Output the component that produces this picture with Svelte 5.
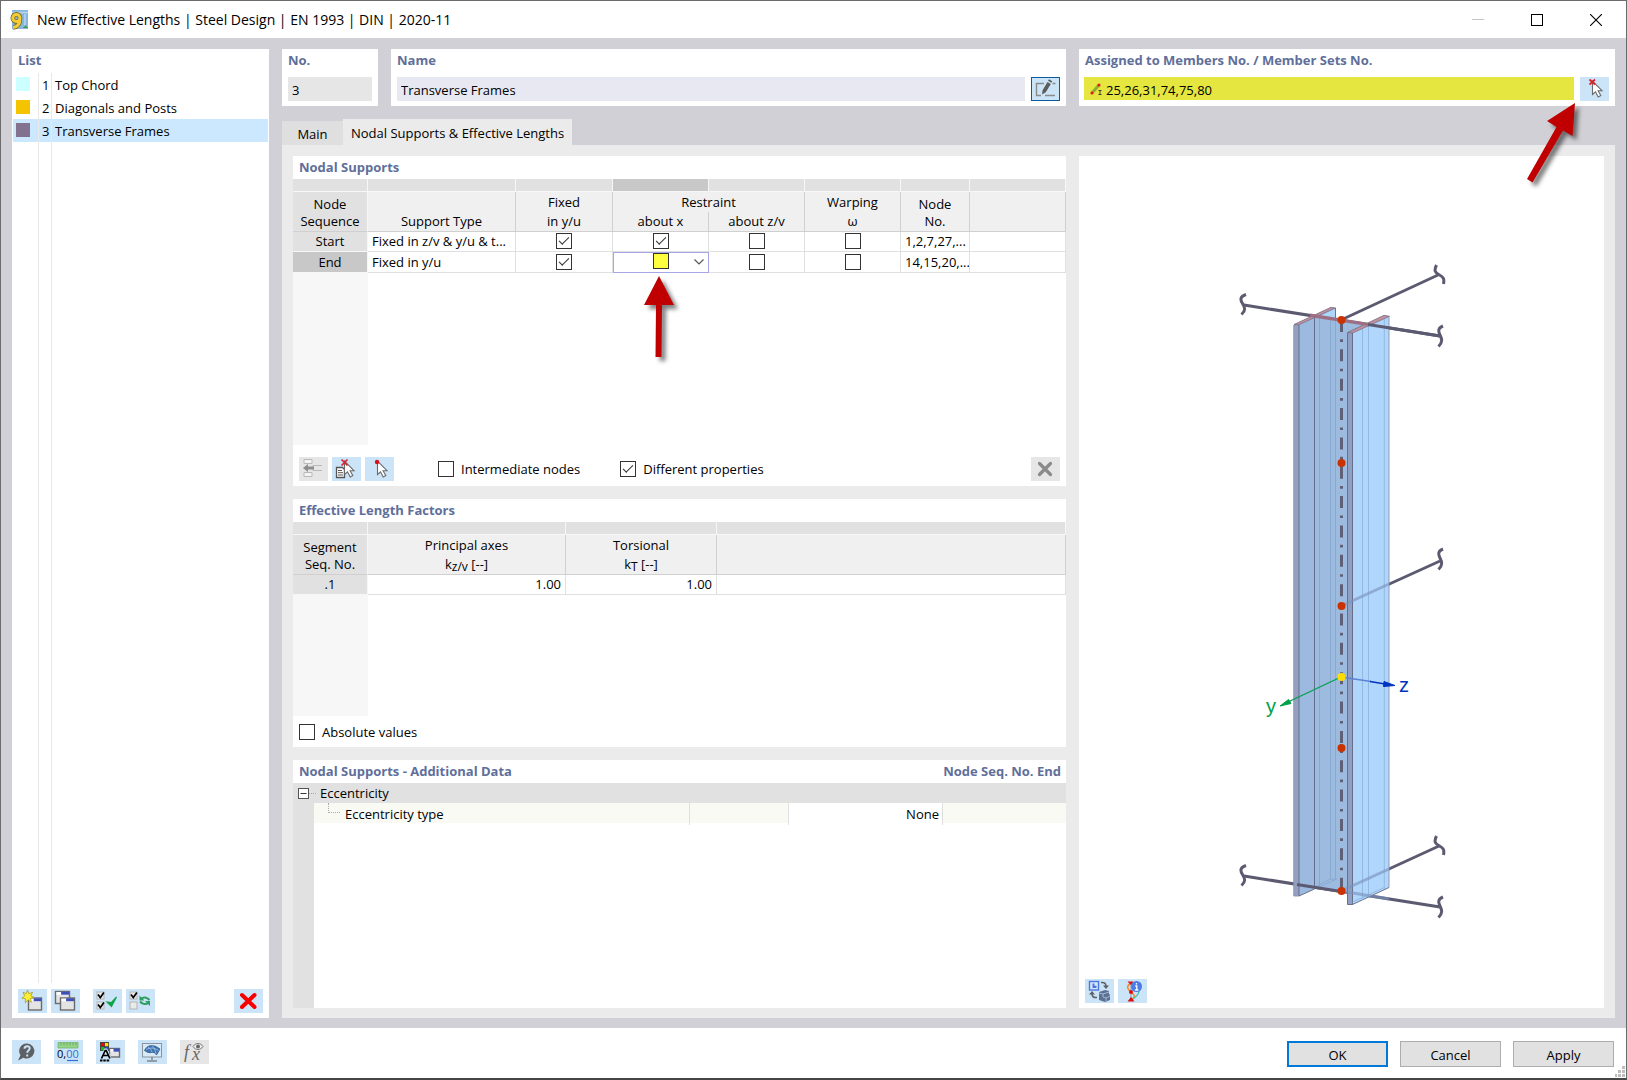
<script lang="ts">
  interface Entry {
    no: number;
    name: string;
    color: string;
  }

  const entries: Entry[] = [
    { no: 1, name: "Top Chord", color: "#ccffff" },
    { no: 2, name: "Diagonals and Posts", color: "#f5c400" },
    { no: 3, name: "Transverse Frames", color: "#83728f" },
  ];

  let selected = $state(3);
  let name = $state("Transverse Frames");
  let members = $state("25,26,31,74,75,80");

  let supports = $state([
    { seq: "Start", type: "Fixed in z/v & y/u & t...", y: true, x: true, z: false, warp: false, nodes: "1,2,7,27,..." },
    { seq: "End", type: "Fixed in y/u", y: true, x: false, z: false, warp: false, nodes: "14,15,20,..." },
  ]);

  let intermediate = $state(false);
  let different = $state(true);
  let absolute = $state(false);

  // node heights along the member axis, in drawing units
  const nodeYs = [70, 213, 356, 498, 641];
</script>

{#snippet miniWindow(x: number, y: number, w: number, h: number)}
  <rect {x} {y} width={w} height={h} fill="#e4e4e4" stroke="#6b6b6b" stroke-width="1.4" />
  <rect x={x + 1} y={y + 0.6} width={w - 2} height="2.6" fill="#fff" />
  <rect x={x + w * 0.4} y={y + 0.2} width={w * 0.6 - 0.4} height="3" fill="#3d4fb8" />
{/snippet}

{#snippet miniCheck(x: number, y: number, on: boolean)}
  <rect {x} {y} width="7" height="7" fill="#e9e9e9" stroke="#b5b5b5" stroke-width="1" />
  {#if on}
    <path d={`M${x + 1} ${y + 2.5}l2.3 3 3.6-5`} fill="none" stroke="#000" stroke-width="1.7" />
  {/if}
{/snippet}

{#snippet cursor()}
  <path d="M12.5 4v13.500l3-2.700 2.700 5.200 2.600-1.400-2.700-4.900h3.900z" fill="#fff" stroke="#6a6a6a" stroke-width="1.100" />
{/snippet}

<div class="window">
  <header class="titlebar">
    <svg class="app-icon" viewBox="0 0 20 22" aria-hidden="true">
      <rect x="3" y="1" width="16" height="19" fill="#86b6de" />
      <path d="M3 3.500h16M16 5v14" stroke="#b9d6ec" stroke-width="1.500" />
      <path d="M14 19l2.500-3 2.500 3z" fill="#3e9b57" />
      <path d="M11 9a3.600 3.600 0 1 0-3.600 3.600C9.500 12.600 11 11 11 9zm0 0c0 5-1.500 9-7 9.500" fill="none" stroke="#7d6a1f" stroke-width="4.600" />
      <path d="M11 9a3.600 3.600 0 1 0-3.600 3.600C9.500 12.600 11 11 11 9zm0 0c0 5-1.500 9-7 9.500" fill="none" stroke="#f3cb38" stroke-width="3" />
    </svg>
    <h1>New Effective Lengths | Steel Design | EN 1993 | DIN | 2020-11</h1>
    <div class="window-buttons">
      <button aria-label="Minimize" disabled><svg viewBox="0 0 12 12"><path d="M0 5.500h12" stroke="#c4c4c4" /></svg></button>
      <button aria-label="Maximize"><svg viewBox="0 0 12 12"><rect x=".5" y=".5" width="11" height="11" fill="none" stroke="#000" /></svg></button>
      <button aria-label="Close"><svg viewBox="0 0 12 12"><path d="M0 0l12 12M12 0L0 12" stroke="#000" stroke-width="1.100" /></svg></button>
    </div>
  </header>

  <main class="body">
    <aside class="panel list-panel">
      <h2>List</h2>
      <ul class="list">
        {#each entries as entry (entry.no)}
          <li>
            <button class="entry" class:selected={selected === entry.no} onclick={() => (selected = entry.no)}>
              <span class="swatch" style="background:{entry.color}"></span>
              <span class="entry-no">{entry.no}</span>
              <span>{entry.name}</span>
            </button>
          </li>
        {/each}
      </ul>
      <div class="tools list-tools">
        <button class="tool" aria-label="New">
          <svg viewBox="0 0 29 24">
            {@render miniWindow(10.5, 9, 13, 12)}
            <path d="M9.500 1l1.400 3.700 3.700-1.500-1.700 3.600 3.300 1.700-3.700.8.800 4-3.300-2.500-2.700 3 .1-4.100-3.600-.6 3-2.300-1.800-3.300 3.400 1z" fill="#ffef2e" stroke="#9a9326" stroke-width=".7" />
          </svg>
        </button>
        <button class="tool" aria-label="Copy">
          <svg viewBox="0 0 29 24">
            {@render miniWindow(4.5, 2.5, 14, 12)}
            {@render miniWindow(9.5, 9, 14, 12)}
          </svg>
        </button>
        <button class="tool spaced" aria-label="Check all">
          <svg viewBox="0 0 29 24">
            {@render miniCheck(4, 3, true)}
            {@render miniCheck(4, 13, true)}
            <path d="M14 13l4.500 4.500L23.500 8l-5 5.500z" fill="#16a34a" stroke="#16a34a" stroke-width="1.200" />
          </svg>
        </button>
        <button class="tool" aria-label="Invert checks">
          <svg viewBox="0 0 29 24">
            {@render miniCheck(4, 3, true)}
            {@render miniCheck(4, 13, false)}
            <path d="M15 10c2.500-2.500 6-2 8.500 1M22.500 13.500c-2.500 2.500-6 2-8.500-1" fill="none" stroke="#2f9e62" stroke-width="2" />
            <path d="M13.500 6.500v5h5zM24 17v-5h-5z" fill="#2f9e62" />
          </svg>
        </button>
        <button class="tool push" aria-label="Delete">
          <svg viewBox="0 0 29 24"><path d="M8 6l12.500 12M20.500 6L8 18" stroke="#f80000" stroke-width="4" stroke-linecap="round" /></svg>
        </button>
      </div>
    </aside>

    <div class="editor">
      <div class="top">
        <section class="panel field-panel">
          <h2><label for="no">No.</label></h2>
          <input id="no" class="no" value="3" readonly />
        </section>
        <section class="panel field-panel">
          <h2><label for="name">Name</label></h2>
          <div class="field-row">
            <input id="name" class="name" bind:value={name} />
            <button class="tool outlined" aria-label="Edit name">
              <svg viewBox="0 0 29 24">
                <path d="M13 6.500H5.500V18.500H10M14 18.500h10M21.500 6.500h3" fill="none" stroke="#8b8b8b" stroke-width="1.400" />
                <path d="M11 17.500l.6-4.300L16.500 5l3.300 2-5 8.200zM17 3.800l1-1.500 3.200 2-.9 1.500z" fill="#5c5c5c" />
              </svg>
            </button>
          </div>
        </section>
        <section class="panel field-panel">
          <h2><label for="members">Assigned to Members No. / Member Sets No.</label></h2>
          <div class="field-row assign">
            <div class="members">
              <svg viewBox="0 0 12 12" aria-hidden="true">
                <path d="M2 10L9 2" stroke="#8fae2c" stroke-width="3" />
                <circle cx="2" cy="10" r="1.600" fill="#e02020" /><circle cx="9" cy="2" r="1.600" fill="#e02020" />
                <path d="M8.500 7.500h3M8.500 11.500h3M10 7.500v4" stroke="#333" stroke-width=".9" />
              </svg>
              <input id="members" bind:value={members} />
            </div>
            <div class="pick">
              <button class="tool" aria-label="Select members">
                <svg viewBox="0 0 29 24">{@render cursor()}<path d="M9.500 2.500l5.500 5M15 2.500l-5.500 5" stroke="#e0202a" stroke-width="1.700" /></svg>
              </button>
              <svg class="arrow-members" viewBox="0 0 60 90" aria-hidden="true">
                <path d="M54 2L26 20l9.500 6L6 78l5.500 3.500 30.500-52L51.500 35z" />
              </svg>
            </div>
          </div>
        </section>
      </div>

      <div class="tabs" role="tablist">
        <button role="tab" aria-selected="false" class="tab">Main</button>
        <button role="tab" aria-selected="true" class="tab active">Nodal Supports &amp; Effective Lengths</button>
      </div>

      <div class="content">
        <div class="sections">
          <section class="panel">
            <h2>Nodal Supports</h2>
            <table class="supports">
              <colgroup>
                <col class="c-seq" /><col class="c-type" /><col class="c-fixed" /><col class="c-check" /><col class="c-check" /><col class="c-check" /><col class="c-nodes" /><col />
              </colgroup>
              <thead>
                <tr class="strip"><td></td><td></td><td></td><td class="current"></td><td></td><td></td><td></td><td></td></tr>
                <tr>
                  <th rowspan="2" class="seq two-line">Node<br />Sequence</th>
                  <th class="upper"></th>
                  <th class="upper">Fixed</th>
                  <th class="upper" colspan="2">Restraint</th>
                  <th class="upper">Warping</th>
                  <th rowspan="2" class="two-line">Node<br />No.</th>
                  <th rowspan="2"></th>
                </tr>
                <tr><th>Support Type</th><th>in y/u</th><th>about x</th><th>about z/v</th><th>ω</th></tr>
              </thead>
              <tbody>
                {#each supports as row, i}
                  <tr>
                    <th class="seq" class:current={i === 1}>{row.seq}</th>
                    <td class="text">{row.type}</td>
                    <td class="mid"><input type="checkbox" aria-label="{row.seq} fixed in y/u" bind:checked={row.y} /></td>
                    {#if i === 1}
                      <td class="mid editing">
                        <input type="checkbox" class="marked" aria-label="{row.seq} restraint about x" bind:checked={row.x} />
                        <button class="drop" aria-label="Open choices"><svg viewBox="0 0 10 6"><path d="M.5.5L5 5 9.500.5" fill="none" stroke="#555" stroke-width="1.200" /></svg></button>
                        <svg class="arrow-cell" viewBox="0 0 44 92" aria-hidden="true"><path d="M20 2L5 31h12l-.5 52h6L23 31h12z" /></svg>
                      </td>
                    {:else}
                      <td class="mid"><input type="checkbox" aria-label="{row.seq} restraint about x" bind:checked={row.x} /></td>
                    {/if}
                    <td class="mid"><input type="checkbox" aria-label="{row.seq} restraint about z/v" bind:checked={row.z} /></td>
                    <td class="mid"><input type="checkbox" aria-label="{row.seq} warping" bind:checked={row.warp} /></td>
                    <td class="text">{row.nodes}</td>
                    <td></td>
                  </tr>
                {/each}
              </tbody>
            </table>
            <div class="gutter"></div>
            <div class="tools table-tools">
              <button class="tool off" aria-label="Insert row" disabled>
                <svg viewBox="0 0 29 24">
                  <path d="M5 2.500h8v4H5zM5 15.500h8v4H5zM14 8.500h9M14 13.500h9M14 8.500v5" fill="#f4f4f4" stroke="#b9b9b9" />
                  <path d="M4 11l5-4v2.500h6v3H9V15z" fill="#8d8d8d" />
                </svg>
              </button>
              <button class="tool" aria-label="Pick from list">
                <svg viewBox="0 0 29 24">
                  <path d="M4.500 10.500h6l2 2v8h-8z" fill="#fff" stroke="#555" stroke-width="1.300" /><path d="M6 13.500h4M6 15.700h5M6 18h5" stroke="#555" />
                  {@render cursor()}<path d="M9.500 2.500l6 6M15.500 2.500l-6 6" stroke="#e0202a" stroke-width="1.700" />
                </svg>
              </button>
              <button class="tool" aria-label="Pick node">
                <svg viewBox="0 0 29 24">{@render cursor()}<circle cx="12" cy="5" r="2.200" fill="#d8101c" /></svg>
              </button>
              <label class="opt-intermediate"><input type="checkbox" bind:checked={intermediate} />Intermediate nodes</label>
              <label class="opt-different"><input type="checkbox" bind:checked={different} />Different properties</label>
              <button class="tool off push" aria-label="Remove row">
                <svg viewBox="0 0 29 24"><path d="M8.500 6.500l11 11M19.500 6.500l-11 11" stroke="#8a8a8a" stroke-width="3.200" stroke-linecap="round" /></svg>
              </button>
            </div>
          </section>

          <section class="panel">
            <h2>Effective Length Factors</h2>
            <table class="factors">
              <colgroup><col class="c-seq" /><col class="c-axes" /><col class="c-tors" /><col /></colgroup>
              <thead>
                <tr class="strip"><td></td><td></td><td></td><td></td></tr>
                <tr>
                  <th rowspan="2" class="seq two-line">Segment<br />Seq. No.</th>
                  <th class="upper">Principal axes</th>
                  <th class="upper">Torsional</th>
                  <th rowspan="2"></th>
                </tr>
                <tr><th>k<sub>z/v</sub> [--]</th><th>k<sub>T</sub> [--]</th></tr>
              </thead>
              <tbody>
                <tr><th class="seq">.1</th><td class="num">1.00</td><td class="num">1.00</td><td></td></tr>
              </tbody>
            </table>
            <div class="gutter"></div>
            <div class="abs-row">
              <label><input type="checkbox" bind:checked={absolute} />Absolute values</label>
            </div>
          </section>

          <section class="panel">
            <div class="split-heading">
              <h2>Nodal Supports - Additional Data</h2>
              <h2>Node Seq. No. End</h2>
            </div>
            <div class="group-row">
              <button class="fold" aria-label="Collapse Eccentricity"><svg viewBox="0 0 11 11"><rect x=".5" y=".5" width="10" height="10" fill="#fff" stroke="#555" /><path d="M2.500 5.500h6" stroke="#333" /></svg></button>
              <span class="stub"></span>
              <span>Eccentricity</span>
            </div>
            <div class="prop-area">
              <div class="prop-row">
                <div class="prop-name"><span class="elbow"></span>Eccentricity type</div>
                <div class="prop-unit"></div>
                <div class="prop-value">None</div>
                <div class="prop-rest"></div>
              </div>
            </div>
          </section>
        </div>

        <section class="panel preview">
          <svg class="member" viewBox="-141 -94 525 823" role="img" aria-label="Member with nodes and local axes y and z">
            <g class="beam">
              <path d="M24 55L220 86M121 70L218 25" />
              <path d="M24 626L220 657M121 641L219 596M121 356L220 311" />
            </g>
            <!-- left flange, web, right flange -->
            <path d="M94 66l21-8v572l-21 8z" fill="#add6fb" />
            <path d="M79 75l15.500-8v572L79 646z" fill="#9cbae0" />
            <path d="M94.500 66L127 71v571l-32.500-4z" fill="#9dbbdf" />
            <path d="M121 70l27 4v2l-21 7z" fill="#9dbbdf" />
            <path d="M74 74.500h5V646h-5z" fill="#959fc2" />
            <path d="M132.500 83L169 66.500V637.500l-36.500 17z" fill="#b1d6fc" />
            <path d="M127.500 82.500h5v572h-5z" fill="#8fa0c4" />
            <g fill="none" stroke="#5d6480" stroke-width=".9">
              <path d="M94.500 66.500V637M79 75v571l15.500-7M127.500 83v571.500h5V83M132.500 654.500l36.500-17" />
              <path d="M73.700 75v571H79M169 67v570.500" stroke="#8a91ab" />
              <path d="M115.500 58v11" />
            </g>
            <g fill="none" stroke="#86a7cf" stroke-width=".9">
              <path d="M99.500 66.500V636M110.500 69v560M115.500 69v560M95 637l15.500-8h6L97 638" />
              <path d="M142.500 79v571M148.500 76v571M164.300 69v570M132.500 652l32-14.500" stroke="#8fb5df" />
            </g>
            <g stroke="#7994bd" stroke-width="3" fill="none" opacity=".65">
              <path d="M121 356l48-22M121 641l48-22M121 641l48 8" />
            </g>
            <path d="M74 74.500l37-17.200 4.500.7L79 74.700zM127.500 82.500l36.500-17.200 5.500 1-37 16.700z" fill="#c3909f" stroke="#65627a" stroke-width=".7" />
            <path class="beam" d="M148 74.600L220 86" />
            <path d="M90 65.200l58 9.200" stroke="#9d6f85" stroke-width="3.400" />
            <path d="M77 634.500L121 641.500" stroke="#5b5a70" stroke-width="3" />
            <path d="M121.500 70v571" stroke="#5f6078" stroke-width="3" stroke-dasharray="12 7.350 2.650 7.350" />
            <g class="beam">
              <path d="M26 44.500c-6 2-6 5-3.500 9s3.500 7-1 11M26 615.500c-6 2-6 5-3.500 9s3.500 7-1 11" />
              <path d="M216.500 15c-3 6-1 8 3 10s5 4 4 9M216.500 586c-3 6-1 8 3 10s5 4 4 9" />
              <path d="M223 76c-5 2-5 5-3 9s3 7-1.500 11.500M223 299c-5 2-5 5-3 9s3 7-1.500 11.500M223 647c-5 2-5 5-3 9s3 7-1.500 11.500" />
            </g>
            {#each nodeYs as y}
              <circle cx="121.500" cy={y} r="4" fill="#c93200" />
            {/each}
            <path d="M121 427l-53 25" stroke="#00a04a" stroke-width="1.300" />
            <path d="M60 456l8.500-6.500 2.500 4z" fill="#00a04a" stroke="#00a04a" />
            <path d="M121 427l30 4.500" stroke="#5c83d6" stroke-width="1.300" />
            <path d="M150 431.500l15 2.500" stroke="#0033bf" stroke-width="1.500" />
            <path d="M175 435.500l-11-4-.5 5z" fill="#0033bf" stroke="#0033bf" />
            <circle cx="121.500" cy="427" r="4" fill="#ffdc00" />
            <text x="46" y="463" fill="#00a04a">y</text>
            <text x="179" y="442" fill="#0033bf">z</text>
          </svg>
          <div class="tools preview-tools">
            <button class="tool" aria-label="Switch view">
              <svg viewBox="0 0 29 24">
                <rect x="4.500" y="2.500" width="9" height="8.500" fill="#dbe6fb" stroke="#4a76e0" stroke-width="1.400" />
                <path d="M7.500 4.500v4.500h4V6.800H9.500V4.500z" fill="#4a76e0" />
                <path d="M16 3.500c4-.5 5 1.500 5 4M12 18.500c-4 .5-5-1.500-5-4" fill="none" stroke="#5d6065" stroke-width="1.500" />
                <path d="M18 6.500h6L21 10zM4 15.500h6L7 12z" fill="#5d6065" />
                <path d="M14 13l6-2 4 1v3l1 1v5l-5 2-6-2z" fill="#5b7196" /><path d="M14 14l4 1 6-2M18 15v3l3 1 4-2M21 19v3" fill="none" stroke="#b8c8de" stroke-width=".8" />
              </svg>
            </button>
            <button class="tool" aria-label="Support information">
              <svg viewBox="0 0 29 24">
                <path d="M13 4v18" stroke="#9aa0a8" stroke-width="1.200" />
                <path d="M13 4c-5 3-4 6 0 9s5 5 0 8" fill="none" stroke="#f28a2c" stroke-width="1.500" />
                <path d="M21 12c0 4-3 5-6 8" fill="none" stroke="#4bc0b4" stroke-width="1.300" />
                <path d="M9.500 2.500h6L13 6zM9.500 22.500h7L13 18z" fill="#dc1010" /><circle cx="13" cy="13" r="2" fill="#dc1010" />
                <circle cx="18.500" cy="7.500" r="5.500" fill="#4a7be8" />
                <path d="M18.500 4v1.600M17.300 7h1.500v4M17 11h3.400" fill="none" stroke="#fff" stroke-width="1.300" />
              </svg>
            </button>
          </div>
        </section>
      </div>
    </div>
  </main>

  <footer class="footer">
    <div class="footer-tools">
      <button class="tool" aria-label="Help">
        <svg viewBox="0 0 29 24">
          <path d="M15 3.500a7.500 7.500 0 1 1-3.500 14.200L6 20.500l2.500-5.300A7.500 7.500 0 0 1 15 3.500z" fill="#5d6165" />
          <path d="M12.500 8.800c0-3.500 5.500-3.300 5.200-.3-.2 2-2.500 2-2.500 4.200M15.200 14.500v2" fill="none" stroke="#cde3f7" stroke-width="2" />
        </svg>
      </button>
      <button class="tool" aria-label="Units and decimal places">
        <svg viewBox="0 0 29 24">
          <path d="M4 2.500h20V8H4z" fill="#97d68a" stroke="#6cae62" stroke-width=".7" /><path d="M7 3v2.500M10 3v2.500M13 3v2.500M16 3v2.500M19 3v2.500M22 3v2.500" stroke="#5b9d52" stroke-width=".8" />
          <text x="3" y="18" class="digits">0,<tspan fill="#2f6fd6">00</tspan></text>
          <path d="M13 20.500h11" stroke="#2f6fd6" stroke-width="1.200" />
        </svg>
      </button>
      <button class="tool" aria-label="Display properties">
        <svg viewBox="0 0 29 24">
          <rect x="4" y="2" width="9" height="9" fill="#444" />
          <rect x="5" y="3" width="3.200" height="3.200" fill="#f00" /><rect x="9" y="3" width="3.200" height="3.200" fill="#ffe000" />
          <rect x="5" y="7" width="3.200" height="3.200" fill="#10c020" /><rect x="9" y="7" width="3.200" height="3.200" fill="#2040ff" />
          {@render miniWindow(13.5, 8.5, 10, 8.5)}
          <path d="M5.500 18.500L9.200 10h1l3.700 8.500M7.300 15.500h5" fill="none" stroke="#cce4f7" stroke-width="3" />
          <path d="M5.500 18.500L9.200 10.500h1l3.700 8M7.300 15.500h5" fill="none" stroke="#000" stroke-width="1.700" />
          <path d="M4 20.500h10" stroke="#000" stroke-width="2" stroke-dasharray="2.500 .8" />
        </svg>
      </button>
      <button class="tool" aria-label="Graphics settings">
        <svg viewBox="0 0 29 24">
          <rect x="4.500" y="3.500" width="19" height="13.500" fill="#d8e9f8" stroke="#8b949c" />
          <path d="M6.500 10.500C9 5 15 3.500 22 9l-3.500 6c-1-2-3-3-5.500-2.500-2 .5-3.500 0-6.500-2z" fill="#3f74b2" stroke="#27517f" stroke-width=".7" />
          <path d="M10 7c2 1.500 3.500 3 4 5M14 5.500c2 2 3 4 4 8M8 9.500c4-2 8-2 12.500 1" fill="none" stroke="#a9c8e6" stroke-width=".8" />
          <path d="M14 17v3M9 21h10" stroke="#7d858c" stroke-width="1.500" />
        </svg>
      </button>
      <button class="tool off" aria-label="Formula view" disabled>
        <svg viewBox="0 0 29 24">
          <text x="4" y="18" class="formula">f</text><text x="12" y="20" class="formula">x</text>
          <path d="M13 6.500c2.500-4 7.500-4 10 0-2.500 4-7.500 4-10 0z" fill="#eee" stroke="#777" /><circle cx="18" cy="6.500" r="2" fill="#666" />
        </svg>
      </button>
    </div>
    <div class="actions">
      <button class="action primary">OK</button>
      <button class="action">Cancel</button>
      <button class="action">Apply</button>
    </div>
    <svg class="grip" viewBox="0 0 11 11" aria-hidden="true">
      <path d="M7 0h3v3H7zM3 4h3v3H3zM7 4h3v3H7zM0 8h2v3H0zM3 8h3v3H3zM7 8h3v3H7z" fill="#bdbdbd" />
    </svg>
  </footer>
</div>

<style>
  :global(body) {
    margin: 0;
    background: #fff;
  }
  .window {
    min-height: 100vh;
    box-sizing: border-box;
    display: flex;
    flex-direction: column;
    border: 1px solid #6b6b6d;
    border-bottom: 2px solid #454545;
    background: #fff;
    color: #000;
    font: 13px/20px "Open Sans", "Noto Sans", sans-serif;
  }
  button,
  input {
    font: inherit;
    color: inherit;
    margin: 0;
    padding: 0;
    border: 0;
    border-radius: 0;
    background: none;
    box-sizing: border-box;
  }
  svg {
    display: block;
  }
  h1,
  h2,
  ul {
    margin: 0;
    padding: 0;
  }
  h2 {
    padding-left: 6px;
    font-size: 13px;
    line-height: 23px;
    font-weight: 700;
    color: #5f6f9a;
  }

  .titlebar {
    display: flex;
    align-items: center;
    height: 37px;
    padding-left: 8px;
  }
  .app-icon {
    width: 20px;
    height: 22px;
    margin-right: 8px;
  }
  h1 {
    font-size: 14px;
    font-weight: 400;
  }
  .window-buttons {
    display: flex;
    margin-left: auto;
    padding-right: 1px;
  }
  .window-buttons button {
    display: grid;
    place-content: center;
    width: 59px;
    height: 36px;
  }
  .window-buttons svg {
    width: 12px;
    height: 12px;
  }

  .body {
    flex: 1;
    display: flex;
    gap: 13px;
    padding: 11px 11px 10px;
    background: #d1d0d6;
  }
  .panel {
    display: flex;
    flex-direction: column;
    background: #fff;
  }

  .list-panel {
    width: 257px;
    flex-shrink: 0;
  }
  .list {
    flex: 1;
    margin: 1px 1px 6px;
    list-style: none;
    background: linear-gradient(#e8e8e8, #e8e8e8) 25px 0 / 1px 100% no-repeat, linear-gradient(#e8e8e8, #e8e8e8) 38px 0 / 1px 100% no-repeat;
  }
  .entry {
    display: flex;
    align-items: center;
    width: 100%;
    height: 23px;
    padding-left: 3px;
    text-align: left;
  }
  .entry.selected {
    background: linear-gradient(#e8e8e8, #e8e8e8) 25px 0 / 1px 100% no-repeat, linear-gradient(#e8e8e8, #e8e8e8) 38px 0 / 1px 100% no-repeat, #cce8ff;
  }
  .swatch {
    width: 14px;
    height: 14px;
    margin-bottom: 2px;
  }
  .entry-no {
    width: 13px;
    margin-left: 12px;
  }

  .tools {
    display: flex;
    align-items: center;
    gap: 4px;
    padding: 0 6px;
  }
  .tool {
    width: 29px;
    height: 24px;
    flex-shrink: 0;
    background: #cce4f7;
  }
  .tool svg {
    width: 29px;
    height: 24px;
  }
  .tool.off {
    background: #e6e6e6;
  }
  .tool.outlined {
    border: 1px solid #0a5a9e;
    display: grid;
    place-content: center;
  }
  .tool.spaced {
    margin-left: 9px;
  }
  .push {
    margin-left: auto;
  }
  .list-tools {
    padding-bottom: 5px;
  }

  .editor {
    flex: 1;
    min-width: 0;
    display: flex;
    flex-direction: column;
  }
  .top {
    display: grid;
    grid-template-columns: 96px minmax(0, 1fr) 536px;
    gap: 13px;
  }
  .field-panel {
    height: 57px;
  }
  .field-panel input {
    height: 24px;
    padding: 2px 0 0 4px;
  }
  .no {
    margin: 5px 6px 0;
    background: #e6e6e6;
  }
  .field-row {
    display: flex;
    gap: 6px;
    margin: 5px 6px 0;
  }
  .field-row.assign {
    margin-left: 5px;
  }
  .name {
    flex: 1;
    background: #e8e8f2;
  }
  .members {
    flex: 1;
    display: flex;
    align-items: center;
    height: 23px;
    padding-left: 6px;
    background: #e6e640;
  }
  .members svg {
    width: 12px;
    height: 12px;
  }
  .members input {
    flex: 1;
  }
  .pick {
    position: relative;
  }
  .arrow-members,
  .arrow-cell {
    position: absolute;
    pointer-events: none;
    fill: #c00000;
    filter: drop-shadow(4px 4px 2px rgba(0, 0, 0, 0.5));
  }
  .arrow-members {
    top: 24px;
    right: 28px;
    width: 60px;
    height: 90px;
  }

  .tabs {
    display: flex;
    align-items: flex-end;
    margin-top: 13px;
  }
  .tab {
    width: 61px;
    height: 24px;
    padding-top: 2px;
    background: #dfdfdf;
  }
  .tab.active {
    width: auto;
    height: 26px;
    padding: 2px 8px 0;
    background: #ebebeb;
  }
  .content {
    flex: 1;
    display: grid;
    grid-template-columns: minmax(0, 1fr) 525px;
    gap: 13px;
    padding: 11px 11px 10px;
    background: #ebebeb;
  }
  .sections {
    display: grid;
    grid-template-rows: 330fr 248fr 248fr;
    gap: 13px;
  }

  table {
    width: 100%;
    table-layout: fixed;
    border-spacing: 0;
  }
  .c-seq {
    width: 75px;
  }
  .c-type {
    width: 148px;
  }
  .c-fixed {
    width: 97px;
  }
  .c-check {
    width: 96px;
  }
  .c-nodes {
    width: 69px;
  }
  .c-axes {
    width: 198px;
  }
  .c-tors {
    width: 151px;
  }
  th,
  td {
    box-sizing: border-box;
    height: 20px;
    padding: 0;
    font-weight: 400;
    line-height: 19px;
    border-right: 1px solid #e0e0e0;
    border-bottom: 1px solid #e0e0e0;
    white-space: nowrap;
  }
  thead th {
    background: #f0f0f0;
    border-color: #d0d0d0;
  }
  thead th.upper {
    border-bottom: 0;
  }
  thead th.two-line {
    line-height: 17px;
    padding-top: 2px;
  }
  .strip td {
    height: 13px;
    background: #e1e1e1;
    border-color: #f7f7f7;
  }
  .strip td.current,
  th.seq.current {
    background: #c8c8c8;
  }
  th.seq {
    background: #e1e1e1;
    border-right-color: #f7f7f7;
    border-bottom-color: #d0d0d0;
  }
  tbody th.seq {
    border-bottom-color: #f7f7f7;
  }
  td.text {
    padding: 0 0 0 4px;
    overflow: hidden;
  }
  td.num {
    padding-right: 4px;
    text-align: right;
  }
  td.mid {
    text-align: center;
  }
  td.mid input {
    vertical-align: top;
    margin-top: 1px;
  }
  td.editing {
    position: relative;
    border: 1px solid #a5a5e8;
  }
  td.editing input {
    margin-top: 0;
  }
  .drop {
    position: absolute;
    right: 4px;
    top: 6px;
    width: 10px;
    height: 6px;
  }
  .arrow-cell {
    left: 25px;
    top: 21px;
    width: 44px;
    height: 92px;
  }
  sub {
    vertical-align: -2px;
    font-size: 12px;
    line-height: 12px;
  }
  .gutter {
    flex: 1;
    width: 75px;
    background: #f7f7f7;
  }

  input[type="checkbox"] {
    appearance: none;
    display: inline-grid;
    place-content: center;
    width: 16px;
    height: 16px;
    flex-shrink: 0;
    border: 1px solid #333;
    background: #fff;
  }
  input[type="checkbox"]:checked::before {
    content: "";
    width: 9px;
    height: 4px;
    margin-bottom: 3px;
    border: solid #333;
    border-width: 0 0 1px 1px;
    transform: rotate(-45deg);
  }
  input[type="checkbox"].marked {
    background: #ffff40;
  }
  label {
    display: inline-flex;
    align-items: center;
    gap: 7px;
  }
  .table-tools {
    height: 24px;
    padding: 12px 6px 5px;
  }
  .opt-intermediate {
    margin-left: 40px;
  }
  .opt-different {
    margin-left: 36px;
  }
  .abs-row {
    height: 31px;
    padding: 6px 6px 0;
    box-sizing: border-box;
  }

  .split-heading {
    display: flex;
    justify-content: space-between;
    padding-right: 5px;
  }
  .group-row {
    display: flex;
    align-items: center;
    height: 20px;
    padding-left: 5px;
    background: #e1e1e1;
  }
  .fold,
  .fold svg {
    width: 11px;
    height: 11px;
  }
  .stub {
    width: 7px;
    margin-right: 4px;
    border-top: 1px dotted #aaa;
  }
  .prop-area {
    flex: 1;
    border-left: 21px solid #e1e1e1;
  }
  .prop-row {
    display: grid;
    grid-template-columns: 375px 99px 154px 1fr;
    height: 20px;
    line-height: 22px;
    background: #fafaf5;
  }
  .prop-row > div + div {
    border-left: 1px solid #e0e0e0;
  }
  .prop-name {
    display: flex;
  }
  .elbow {
    width: 12px;
    height: 10px;
    margin: 0 5px 10px 14px;
    border: dotted #aaa;
    border-width: 0 0 1px 1px;
    box-sizing: border-box;
  }
  .prop-value {
    padding-right: 3px;
    background: #fff;
    text-align: right;
  }

  .preview .member {
    flex: 1;
    width: 100%;
    min-height: 0;
  }
  .beam {
    fill: none;
    stroke: #5b5a70;
    stroke-width: 3;
  }
  .member text {
    font: 20px "Liberation Sans", sans-serif;
  }
  .preview-tools {
    padding-bottom: 5px;
  }
  .digits {
    font: 11px "Open Sans", sans-serif;
  }
  .formula {
    font: italic 18px "Liberation Serif", serif;
    fill: #666;
  }

  .footer {
    display: flex;
    align-items: flex-start;
    height: 50px;
    padding: 12px 0 0 11px;
    box-sizing: border-box;
  }
  .footer-tools,
  .actions {
    display: flex;
    gap: 13px;
  }
  .actions {
    margin: 1px 1px 0 auto;
    gap: 12px;
  }
  .action {
    width: 101px;
    height: 26px;
    padding-top: 2px;
    line-height: 20px;
    background: #e1e1e1;
    border: 1px solid #adadad;
  }
  .action.primary {
    border: 2px solid #0078d7;
  }
  .grip {
    width: 11px;
    height: 11px;
    align-self: flex-end;
    margin-bottom: 1px;
  }
</style>
